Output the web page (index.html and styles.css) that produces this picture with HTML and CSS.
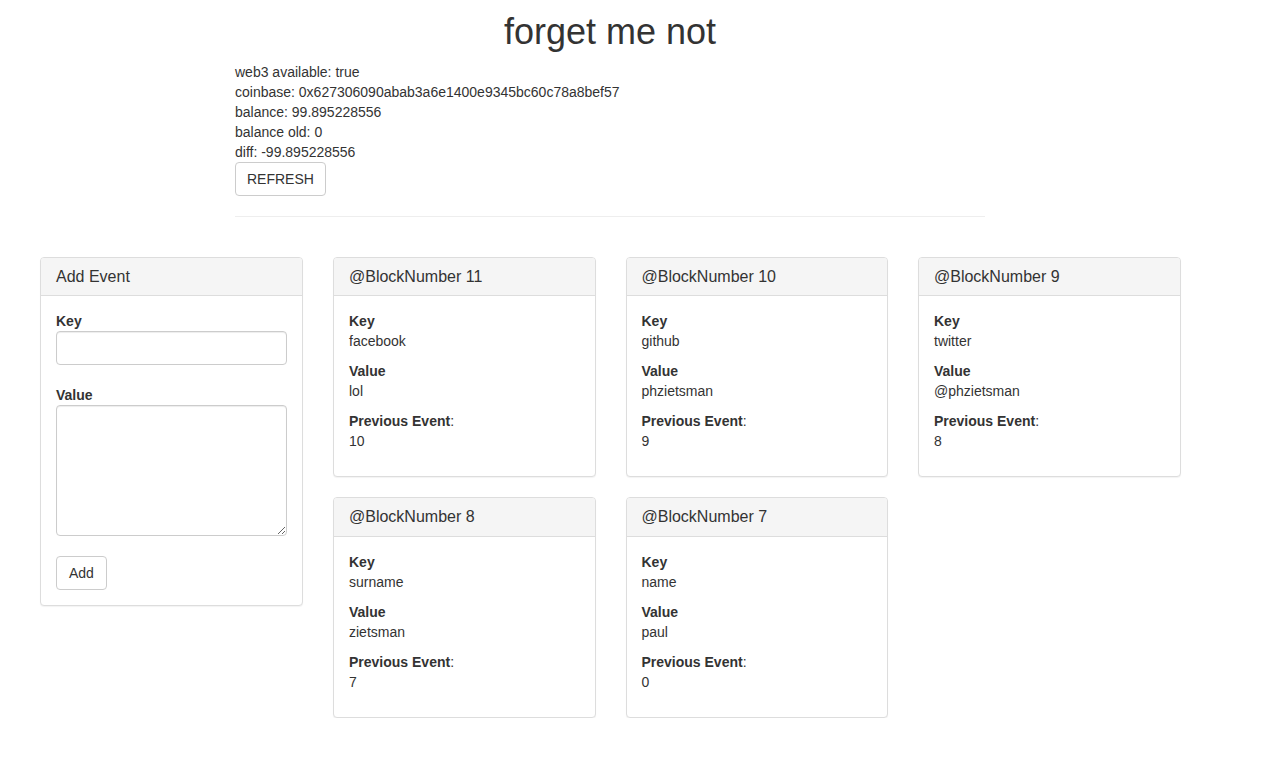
FILE: index.html
```html
<!DOCTYPE html>
<html lang="en">
<head>
<meta charset="utf-8">
<title>forget me not</title>
<link rel="stylesheet" href="styles.css">
</head>
<body>
<div class="header">
  <h1 class="title">forget me not</h1>
  <div class="info">
    <div>web3 available: true</div>
    <div>coinbase: 0x627306090abab3a6e1400e9345bc60c78a8bef57</div>
    <div>balance: 99.895228556</div>
    <div>balance old: 0</div>
    <div>diff: -99.895228556</div>
  </div>
  <button class="btn btn-refresh">REFRESH</button>
  <hr class="divider">
</div>

<div class="main">
  <div class="side">
    <div class="panel">
      <div class="panel-heading">Add Event</div>
      <div class="panel-body">
        <div class="form-group">
          <label class="label">Key</label>
          <input class="form-control" type="text">
        </div>
        <div class="form-group">
          <label class="label">Value</label>
          <textarea class="form-control textarea"></textarea>
        </div>
        <button class="btn">Add</button>
      </div>
    </div>
  </div>

  <div class="events">
    <div class="panel">
      <div class="panel-heading">@BlockNumber 11</div>
      <div class="panel-body">
        <p class="field"><strong>Key</strong><br>facebook</p>
        <p class="field"><strong>Value</strong><br>lol</p>
        <p class="field"><strong>Previous Event</strong>:<br>10</p>
      </div>
    </div>
    <div class="panel">
      <div class="panel-heading">@BlockNumber 10</div>
      <div class="panel-body">
        <p class="field"><strong>Key</strong><br>github</p>
        <p class="field"><strong>Value</strong><br>phzietsman</p>
        <p class="field"><strong>Previous Event</strong>:<br>9</p>
      </div>
    </div>
    <div class="panel">
      <div class="panel-heading">@BlockNumber 9</div>
      <div class="panel-body">
        <p class="field"><strong>Key</strong><br>twitter</p>
        <p class="field"><strong>Value</strong><br>@phzietsman</p>
        <p class="field"><strong>Previous Event</strong>:<br>8</p>
      </div>
    </div>
    <div class="panel">
      <div class="panel-heading">@BlockNumber 8</div>
      <div class="panel-body">
        <p class="field"><strong>Key</strong><br>surname</p>
        <p class="field"><strong>Value</strong><br>zietsman</p>
        <p class="field"><strong>Previous Event</strong>:<br>7</p>
      </div>
    </div>
    <div class="panel">
      <div class="panel-heading">@BlockNumber 7</div>
      <div class="panel-body">
        <p class="field"><strong>Key</strong><br>name</p>
        <p class="field"><strong>Value</strong><br>paul</p>
        <p class="field"><strong>Previous Event</strong>:<br>0</p>
      </div>
    </div>
  </div>
</div>
</body>
</html>
```

FILE: styles.css
```css
* {
  box-sizing: border-box;
}

html, body {
  margin: 0;
  padding: 0;
  background: #fff;
}

body {
  font-family: "Liberation Sans", Arial, Helvetica, sans-serif;
  font-size: 14px;
  line-height: 20px;
  color: #333;
}

.header {
  width: 750px;
  margin-left: 235px;
}

.title {
  margin: 12px 0 10px;
  font-size: 36px;
  line-height: 40px;
  font-weight: 500;
  text-align: center;
  color: #333;
}

.info {
  margin-bottom: 0;
}

.btn {
  display: inline-block;
  padding: 6px 12px;
  font-family: inherit;
  font-size: 14px;
  line-height: 20px;
  color: #333;
  background: #fff;
  border: 1px solid #ccc;
  border-radius: 4px;
  cursor: pointer;
}

.btn-refresh {
  display: block;
  padding: 6px 11px;
}

.divider {
  margin: 20px 0 0;
  border: 0;
  border-top: 1px solid #eee;
  height: 0;
}

.main {
  display: flex;
  gap: 30.5px;
  margin-top: 39.5px;
  padding-left: 40px;
}

.side {
  width: 262.5px;
  flex: none;
}

.events {
  display: grid;
  grid-template-columns: repeat(3, 262.5px);
  column-gap: 30px;
  row-gap: 20px;
  align-content: start;
}

.panel {
  background: #fff;
  border: 1px solid #ddd;
  border-radius: 4px;
  box-shadow: 0 1px 1px rgba(0, 0, 0, 0.05);
}

.panel-heading {
  padding: 10px 15px;
  font-size: 16px;
  line-height: 17.6px;
  background: #f5f5f5;
  border-bottom: 1px solid #ddd;
  border-radius: 3px 3px 0 0;
  color: #333;
}

.panel-body {
  padding: 15px;
}

.field {
  margin: 0 0 10px;
}

.field strong {
  font-weight: 700;
}

.form-group {
  margin-bottom: 20px;
}

.label {
  display: block;
  font-weight: 700;
  margin: 0;
}

.form-control {
  display: block;
  width: 100%;
  height: 34px;
  padding: 6px 12px;
  font-family: inherit;
  font-size: 14px;
  line-height: 20px;
  color: #555;
  background: #fff;
  border: 1px solid #ccc;
  border-radius: 4px;
  box-shadow: inset 0 1px 1px rgba(0, 0, 0, 0.075);
}

.textarea {
  height: 131px;
  resize: vertical;
}
```
